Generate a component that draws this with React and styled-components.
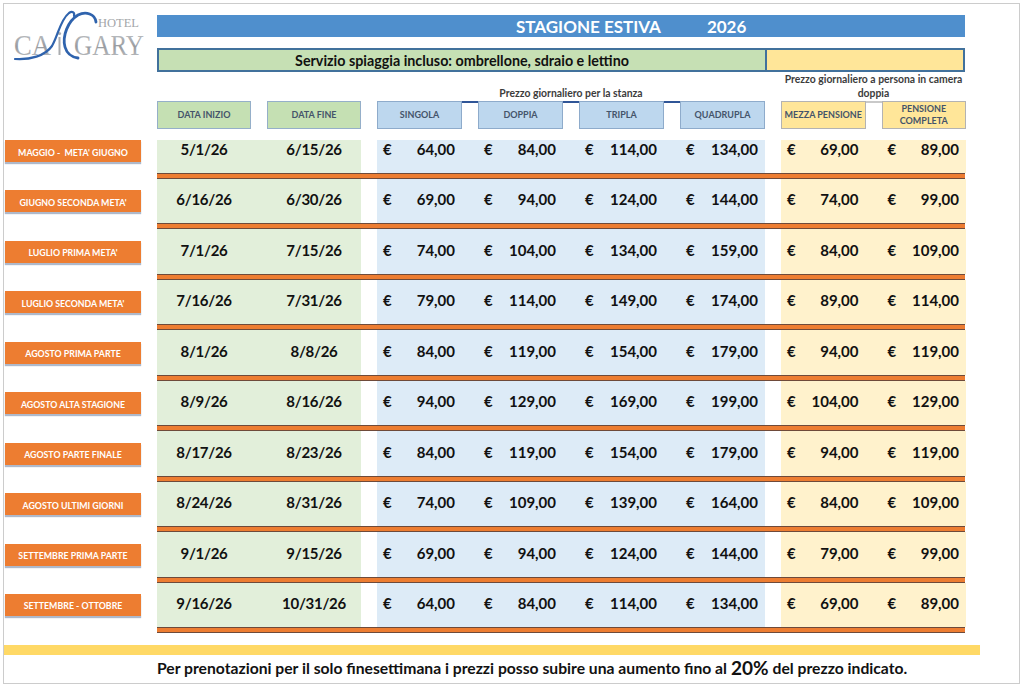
import React from 'react';
import styled, { createGlobalStyle } from 'styled-components';

const GlobalStyle = createGlobalStyle`
    html, body {
        margin: 0;
        padding: 0;
        background: #ffffff;
    }
    body {
        font-family: Lato, "Open Sans", sans-serif;
        color: #111111;
    }
`;

const rows = [
    { label: "MAGGIO -  META' GIUGNO", from: '5/1/26', to: '6/15/26', room: [64, 84, 114, 134], board: [69, 89] },
    { label: "GIUGNO SECONDA META'", from: '6/16/26', to: '6/30/26', room: [69, 94, 124, 144], board: [74, 99] },
    { label: "LUGLIO PRIMA META'", from: '7/1/26', to: '7/15/26', room: [74, 104, 134, 159], board: [84, 109] },
    { label: "LUGLIO SECONDA META'", from: '7/16/26', to: '7/31/26', room: [79, 114, 149, 174], board: [89, 114] },
    { label: 'AGOSTO PRIMA PARTE', from: '8/1/26', to: '8/8/26', room: [84, 119, 154, 179], board: [94, 119] },
    { label: 'AGOSTO ALTA STAGIONE', from: '8/9/26', to: '8/16/26', room: [94, 129, 169, 199], board: [104, 129] },
    { label: 'AGOSTO PARTE FINALE', from: '8/17/26', to: '8/23/26', room: [84, 119, 154, 179], board: [94, 119] },
    { label: 'AGOSTO ULTIMI GIORNI', from: '8/24/26', to: '8/31/26', room: [74, 109, 139, 164], board: [84, 109] },
    { label: 'SETTEMBRE PRIMA PARTE', from: '9/1/26', to: '9/15/26', room: [69, 94, 124, 144], board: [79, 99] },
    { label: 'SETTEMBRE - OTTOBRE', from: '9/16/26', to: '10/31/26', room: [64, 84, 114, 134], board: [69, 89] },
];

const roomHeaders = ['SINGOLA', 'DOPPIA', 'TRIPLA', 'QUADRUPLA'];

function Logo() {
    return (
        <LogoSvg width="153" height="60" viewBox="4 4 153 60">
            <defs>
                <linearGradient id="silver" x1="0" y1="0" x2="0" y2="1">
                    <stop offset="0" stopColor="#c9cbcd" />
                    <stop offset="0.55" stopColor="#989ba0" />
                    <stop offset="1" stopColor="#c4c6c8" />
                </linearGradient>
            </defs>
            <text x="98" y="27" textLength="41" lengthAdjust="spacingAndGlyphs"
                fontFamily="'Liberation Serif', serif" fontSize="11.5" fill="#a3a6a9">HOTEL</text>
            <text x="14" y="55" textLength="37" lengthAdjust="spacingAndGlyphs"
                fontFamily="'Liberation Serif', serif" fontSize="29" fill="url(#silver)">CA</text>
            <text x="74" y="55" textLength="70" lengthAdjust="spacingAndGlyphs"
                fontFamily="'Liberation Serif', serif" fontSize="29" fill="url(#silver)">GARY</text>
            <rect x="58.5" y="37" width="2" height="18" fill="#a9acaf" />
            <circle cx="59.5" cy="33.5" r="1.6" fill="#a9acaf" />
            <path d="M15 59 C30 60 45 56 52 46 C58 36 60 20 69 13 C72 11 75 12 74 16"
                fill="none" stroke="#2f63ad" strokeWidth="2.2" strokeLinecap="round" />
            <path d="M96 22 C95 14 86 11 78 15 C68 21 62 36 65 47 C67 54 71 57 78 58"
                fill="none" stroke="#2f63ad" strokeWidth="2.8" strokeLinecap="round" />
        </LogoSvg>
    );
}

const euro = n => `${n},00`;

export default function App() {
    return (
        <>
            <GlobalStyle />
            <Frame>
                <Top>
                    <Logo />
                    <TopRight>
                        <TitleBar>
                            <span>STAGIONE ESTIVA</span>
                            <span>2026</span>
                        </TitleBar>
                        <ServiceBar>
                            <ServiceText>Servizio spiaggia incluso: ombrellone, sdraio e lettino</ServiceText>
                            <ServiceSide />
                        </ServiceBar>
                    </TopRight>
                </Top>

                <CaptionRow>
                    <span />
                    <span />
                    <Caption>Prezzo giornaliero per la stanza</Caption>
                    <Caption>Prezzo giornaliero a persona in camera<br />doppia</Caption>
                </CaptionRow>

                <HeaderRow>
                    <span />
                    <Group cols={2}>
                        <HeadCell tone="green">DATA INIZIO</HeadCell>
                        <HeadCell tone="green">DATA FINE</HeadCell>
                    </Group>
                    <Group cols={4} line="#2f5597">
                        {roomHeaders.map(h => <HeadCell key={h} tone="blue">{h}</HeadCell>)}
                    </Group>
                    <Group cols={2} line="#c9c9c9">
                        <HeadCell tone="yellow">MEZZA PENSIONE</HeadCell>
                        <HeadCell tone="yellow">PENSIONE<br />COMPLETA</HeadCell>
                    </Group>
                </HeaderRow>

                <Body>
                    {rows.map((r, i) => (
                        <React.Fragment key={r.label}>
                            <Row first={i === 0}>
                                <Label>{r.label}</Label>
                                <Group cols={2} bg="#e2efda">
                                    <DateCell>{r.from}</DateCell>
                                    <DateCell>{r.to}</DateCell>
                                </Group>
                                <Group cols={4} bg="#ddebf7">
                                    {r.room.map((p, j) => (
                                        <PriceCell key={j}><span>€</span><span>{euro(p)}</span></PriceCell>
                                    ))}
                                </Group>
                                <Group cols={2} bg="#fff2cc">
                                    {r.board.map((p, j) => (
                                        <PriceCell key={j}><span>€</span><span>{euro(p)}</span></PriceCell>
                                    ))}
                                </Group>
                            </Row>
                            <Separator />
                        </React.Fragment>
                    ))}
                </Body>

                <FooterBar />
                <FooterNote>
                    Per prenotazioni per il solo finesettimana i prezzi posso subire una aumento fino al <Big>20%</Big> del prezzo indicato.
                </FooterNote>
            </Frame>
        </>
    );
}

const Frame = styled.div`
    box-sizing: border-box;
    width: 1017px;
    height: 681px;
    margin: 3px 0 0 3px;
    border: 1px solid #cccccc;
    overflow: hidden;
`;

const Top = styled.div`
    display: grid;
    grid-template-columns: 137px 808px;
    column-gap: 16px;
    padding-top: 11px;
`;

const LogoSvg = styled.svg`
    display: block;
    margin-top: -11px;
    overflow: visible;
`;

const TopRight = styled.div`
    display: flex;
    flex-direction: column;
    gap: 11px;
`;

const TitleBar = styled.div`
    height: 22px;
    background: #4f8fcd;
    color: #ffffff;
    font-weight: 700;
    font-size: 17px;
    display: flex;
    align-items: center;
    gap: 46px;
    padding-left: 359px;
`;

const ServiceBar = styled.div`
    box-sizing: border-box;
    height: 24px;
    display: grid;
    grid-template-columns: 606px 1fr;
    border: 2px solid #41719c;
`;

const ServiceText = styled.div`
    background: #c6e0b4;
    font-weight: 700;
    font-size: 14.3px;
    display: flex;
    align-items: center;
    justify-content: center;
`;

const ServiceSide = styled.div`
    background: #ffe699;
    border-left: 2px solid #41719c;
`;

const Columns = styled.div`
    display: grid;
    grid-template-columns: 137px 204px 388px 185px;
    column-gap: 16px;
`;

const CaptionRow = styled(Columns)`
    height: 29px;
    align-items: end;
`;

const Caption = styled.div`
    text-align: center;
    font-size: 10.4px;
    font-weight: 700;
    line-height: 14px;
    color: #3c3c3c;
    padding-bottom: 1px;
    white-space: nowrap;
`;

const HeaderRow = styled(Columns)`
    height: 28px;
    margin-bottom: 11px;
`;

const Group = styled.div`
    display: grid;
    grid-template-columns: repeat(${p => p.cols}, 1fr);
    column-gap: 16px;
    background: ${p => p.line
        ? `linear-gradient(to bottom, ${p.line} 0 2px, transparent 2px)`
        : (p.bg || 'transparent')};
`;

const toneMap = {
    green: { bg: '#c5e0b3', border: '#95afc9' },
    blue: { bg: '#bdd7ee', border: '#8eabcb' },
    yellow: { bg: '#ffe699', border: '#b3b3b3' },
};

const HeadCell = styled.div`
    box-sizing: border-box;
    background: ${p => toneMap[p.tone].bg};
    border: 1px solid ${p => toneMap[p.tone].border};
    color: #44546a;
    font-size: 9px;
    font-weight: 700;
    line-height: 12px;
    display: flex;
    align-items: center;
    justify-content: center;
    text-align: center;
    white-space: nowrap;
`;

const Body = styled.div`
    display: flex;
    flex-direction: column;
`;

const Row = styled(Columns)`
    height: ${p => (p.first ? '33px' : '44.44px')};
`;

const Label = styled.div`
    align-self: end;
    margin: 0 0 11px 1px;
    width: 136px;
    height: 22px;
    background: #ed7d31;
    box-shadow: 0 2px 1px #aeb9cb;
    color: #ffffff;
    font-size: 8.8px;
    font-weight: 700;
    white-space: pre;
    display: flex;
    align-items: center;
    justify-content: center;
    padding-top: 2px;
    box-sizing: border-box;
`;

const DateCell = styled.div`
    display: flex;
    align-items: flex-end;
    justify-content: center;
    padding-bottom: 15px;
    font-size: 15px;
    font-weight: 700;
    line-height: 18px;
    letter-spacing: -0.3px;
`;

const PriceCell = styled.div`
    display: flex;
    align-items: flex-end;
    justify-content: space-between;
    padding: 0 7px 15px 6px;
    font-size: 15px;
    font-weight: 700;
    line-height: 18px;
`;

const Separator = styled.div`
    box-sizing: border-box;
    margin-left: 153px;
    width: 808px;
    height: 6px;
    background: #ed7d31;
    border-top: 1px solid #6e4a3a;
    border-bottom: 1px solid #6e4a3a;
`;

const FooterBar = styled.div`
    margin-top: 12px;
    width: 976px;
    height: 10px;
    background: #ffd966;
`;

const FooterNote = styled.div`
    height: 26px;
    display: flex;
    align-items: center;
    padding-left: 153px;
    font-size: 15.7px;
    font-weight: 700;
    white-space: nowrap;
`;

const Big = styled.span`
    font-size: 19px;
    margin: 0 4px;
`;
